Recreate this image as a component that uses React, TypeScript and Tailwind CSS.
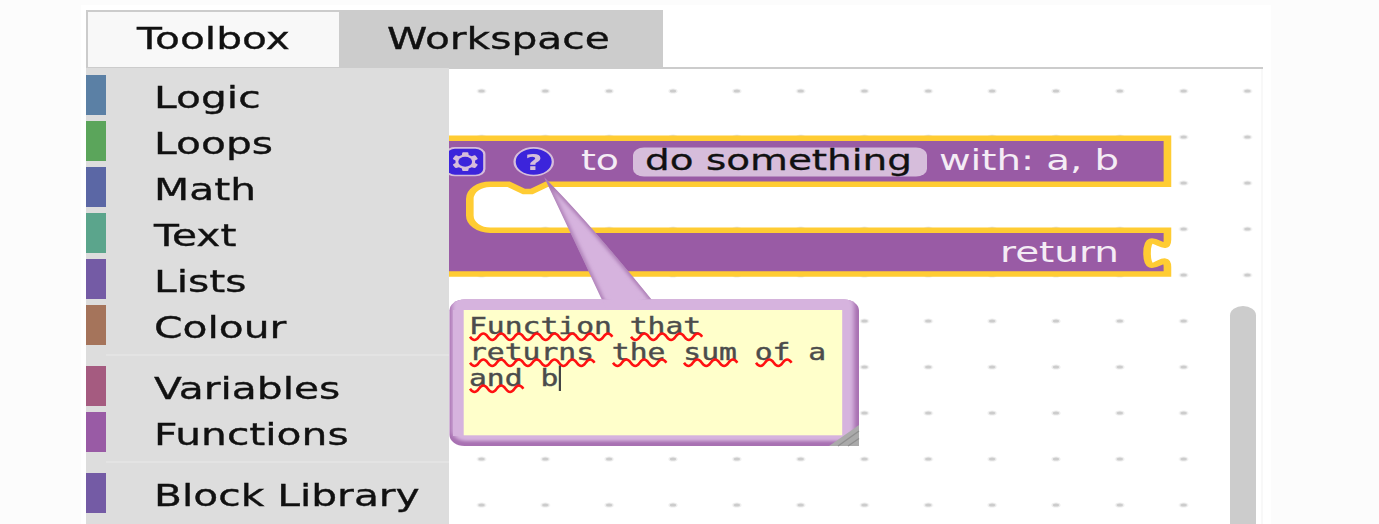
import React from "react";

type Category = { name: string; swatch: string };

const groups: Category[][] = [
  [
    { name: "Logic", swatch: "bg-[#5b80a5]" },
    { name: "Loops", swatch: "bg-[#5ba55b]" },
    { name: "Math", swatch: "bg-[#5b67a5]" },
    { name: "Text", swatch: "bg-[#5ba58c]" },
    { name: "Lists", swatch: "bg-[#745ba5]" },
    { name: "Colour", swatch: "bg-[#a5745b]" },
  ],
  [
    { name: "Variables", swatch: "bg-[#a55b80]" },
    { name: "Functions", swatch: "bg-[#995ba5]" },
  ],
  [{ name: "Block Library", swatch: "bg-[#745ba5]" }],
];

function WideText({ children }: { children: string }) {
  return (
    <span className="inline-block origin-left scale-x-[1.387] whitespace-nowrap text-[29.4px] leading-[40px] text-[#111] [-webkit-text-stroke:0.35px_#111]">
      {children}
    </span>
  );
}

function Tabs() {
  return (
    <div className="flex h-[59px] shrink-0 border-b-2 border-[#ccc]">
      <div className="flex h-[57px] w-[253px] items-center border-2 border-b-0 border-r-0 border-[#ccc] bg-[#f8f8f8] pb-[2px] pl-[49px]">
        <WideText>Toolbox</WideText>
      </div>
      <div className="flex h-[59px] w-[324px] items-center bg-[#ccc] pl-[48px] pb-[2px]">
        <WideText>Workspace</WideText>
      </div>
    </div>
  );
}

function Toolbox() {
  return (
    <nav className="-mt-px flex w-[363px] shrink-0 flex-col bg-[#ddd] pt-[7px]">
      {groups.map((group, i) => (
        <React.Fragment key={i}>
          {i > 0 && <div className="mb-[10px] mt-[9px] ml-[20px] h-[2px] shrink-0 bg-[#e3e3e3]" />}
          <div className="flex flex-col gap-[6px]">
            {group.map((c) => (
              <div key={c.name} className="flex h-[40px] items-center">
                <div className={`h-[40px] w-[20px] ${c.swatch}`} />
                <div className="flex items-center pl-[48px] pt-[5px]">
                  <WideText>{c.name}</WideText>
                </div>
              </div>
            ))}
          </div>
        </React.Fragment>
      ))}
    </nav>
  );
}

function squiggle(x1: number, x2: number, y: number) {
  let d = `M${x1} ${y + 0.8}`;
  let x = x1;
  let up = false;
  while (x + 8.9 <= x2 + 3) {
    d += ` q4.45 ${up ? -6.4 : 6.4} 8.9 0`;
    x += 8.9;
    up = !up;
  }
  return d;
}

const misspelt: [number, number, number][] = [
  [470, 612, 336],
  [631, 702, 336],
  [470, 595, 362],
  [613, 667, 362],
  [684, 738, 362],
  [756, 792, 362],
  [470, 524, 388],
];

const gear =
  "m4.203,7.296 0,1.368 -0.92,0.677 -0.11,0.41 0.9,1.559 0.41,0.11 1.043,-0.457 1.187,0.683 0.127,1.134 0.3,0.3 1.8,0 0.3,-0.299 0.127,-1.138 1.185,-0.682 1.046,0.458 0.409,-0.11 0.9,-1.559 -0.11,-0.41 -0.92,-0.677 0,-1.366 0.92,-0.677 0.11,-0.41 -0.9,-1.559 -0.409,-0.109 -1.046,0.458 -1.185,-0.682 -0.127,-1.138 -0.3,-0.299 -1.8,0 -0.3,0.3 -0.126,1.135 -1.187,0.682 -1.043,-0.457 -0.41,0.11 -0.899,1.559 0.108,0.409z";

const block =
  "M-20 138.2 H517.8 V184.2 H70.5 l-11 7.4 h-5.5 l-11 -7.4 H29.7 a14.7 14.7 0 0 0 -14.7 14.7 V215.5 a14.7 14.7 0 0 0 14.7 14.7 H517.8 v9.2 c0 18.4 -14.7 -14.7 -14.7 13.8 s14.7 -4.6 14.7 13.8 V274 H-20 Z";

const tail = "M544 177 Q572 236 601 298 L606 306 H652 L652 300 Q588 221 544 177 Z";

function Label({ x, y, w, dark, children }: { x: number; y: number; w: number; dark?: boolean; children: string }) {
  return (
    <text
      x={x}
      y={y}
      textLength={w}
      lengthAdjust="spacingAndGlyphs"
      strokeWidth="0.3"
      className={dark ? "fill-[#111] stroke-[#111] text-[28px]" : "fill-[#f4ecf5] text-[28px]"}
    >
      {children}
    </text>
  );
}

function CommentLine({ y, n, children }: { y: number; n: number; children: string }) {
  return (
    <text
      x={469}
      y={y}
      textLength={n * 17.86}
      lengthAdjust="spacingAndGlyphs"
      strokeWidth="0.4"
      className="fill-[#4c4c4c] stroke-[#4c4c4c] font-['DejaVu_Sans_Mono',monospace] text-[22.5px]"
    >
      {children}
    </text>
  );
}

function Workspace() {
  return (
    <svg width="814" height="455" viewBox="449 69 814 455" className="block shrink-0">
      <defs>
        <pattern id="dots" x="449.6" y="68" width="63.83" height="46" patternUnits="userSpaceOnUse">
          <ellipse cx="31.9" cy="23" rx="4.6" ry="2.6" fill="#eee" />
          <ellipse cx="31.9" cy="23" rx="3.1" ry="1.6" fill="#ccc" />
        </pattern>
        <filter id="soft" x="-10%" y="-10%" width="120%" height="120%">
          <feGaussianBlur stdDeviation="2 1.4" />
        </filter>
        <clipPath id="tailClip">
          <path d={tail} />
        </clipPath>
        <clipPath id="bubble">
          <rect x="449.5" y="299.5" width="409.5" height="146.5" rx="15" ry="11" />
        </clipPath>
      </defs>
      <rect x="449" y="69" width="814" height="455" fill="#fff" />
      <rect x="449" y="69" width="814" height="455" fill="url(#dots)" />
      <rect x="1228" y="300" width="33" height="224" fill="#fff" />
      <rect x="1230" y="306" width="26" height="250" rx="13" ry="9.5" fill="#ccc" />
      <rect x="1261" y="69" width="2" height="455" fill="#f8f8f8" />

      <g transform="translate(449 0) scale(1.3875 1)">
        <path d={block} fill="#995ba5" stroke="#fc3" strokeWidth="5.5" />
      </g>
      <g transform="translate(444.8 147) scale(2.55 1.84)" opacity="0.6">
        <rect x="0.5" y="0.5" width="15" height="15" rx="3.5" fill="#00f" stroke="#fff" strokeWidth="0.9" />
        <path d={gear} fill="#fff" />
        <circle cx="8" cy="8" r="2.7" fill="#00f" />
      </g>
      <g transform="translate(513.3 147) scale(2.55 1.84)" opacity="0.6">
        <circle cx="8" cy="8" r="7.5" fill="#00f" stroke="#fff" strokeWidth="0.9" />
        <text x="8" y="12.4" textAnchor="middle" className="fill-white text-[11.5px] font-bold">
          ?
        </text>
      </g>
      <Label x={581} y={170.3} w={38}>to</Label>
      <rect x="633" y="147.5" width="294" height="29" rx="11" ry="7.5" fill="#d6bddb" />
      <Label x={645} y={170.3} w={267} dark>do something</Label>
      <Label x={939} y={170.3} w={180}>with: a, b</Label>
      <Label x={1000} y={262.3} w={119}>return</Label>

      <g clipPath="url(#tailClip)">
        <path d={tail} fill="#d6b3de" />
        <path d={tail} fill="none" stroke="#a473ae" strokeWidth="4" filter="url(#soft)" />
      </g>
      <g clipPath="url(#bubble)">
        <rect x="449" y="299" width="411" height="148" fill="#a871b2" />
        <rect x="452" y="294" width="402" height="147" rx="14" ry="11" fill="#d6b3de" filter="url(#soft)" />
        <rect x="460" y="297" width="388" height="12" fill="#d6b3de" />
        <path d="M458 302.5 H850" stroke="#e2c6ea" strokeWidth="3" filter="url(#soft)" />
        <path d="M458.5 310 V436" stroke="#d6b3de" strokeWidth="11" />
      </g>
      <path d="M606 292 L610 306 H644 L640 292 Z" fill="#d6b3de" filter="url(#soft)" />
      <rect x="463.7" y="310" width="378.5" height="125.3" fill="#ffffcb" />
      <path d="M829 446 L859 425 V446 Z" fill="#aaa" />
      <path d="M838 446 L859 431 M848 446 L859 438.5" stroke="#8f8f8f" strokeWidth="1.4" fill="none" />

      <CommentLine y={334.4} n={13}>Function that</CommentLine>
      <CommentLine y={360} n={20}>returns the sum of a</CommentLine>
      <CommentLine y={385.8} n={5}>and b</CommentLine>
      {misspelt.map(([a, b, y], i) => (
        <path key={i} d={squiggle(a, b, y)} fill="none" stroke="#f11" strokeWidth="2.5" />
      ))}
      <rect x="558.8" y="365.5" width="2.2" height="25.5" fill="#444" />
    </svg>
  );
}

export default function App() {
  return (
    <div className="h-[524px] w-[1379px] overflow-hidden bg-[#fcfcfc] pl-[81px] pt-[5px] font-['DejaVu_Sans',sans-serif]">
      <div className="flex h-[519px] w-[1190px] flex-col bg-white pl-[5px] pr-[8px] pt-[5px]">
        <Tabs />
        <div className="flex h-[455px]">
          <Toolbox />
          <Workspace />
        </div>
      </div>
    </div>
  );
}
